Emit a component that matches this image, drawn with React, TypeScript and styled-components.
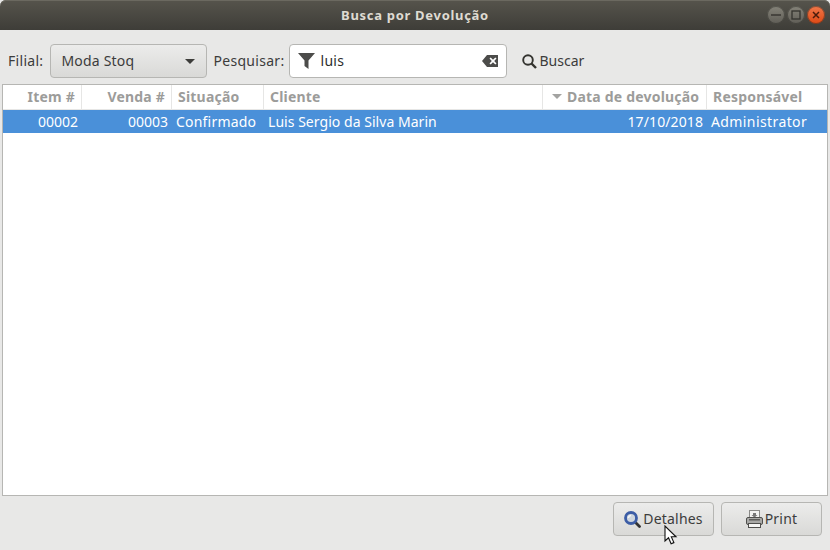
import styled, { createGlobalStyle } from 'styled-components';

const GlobalStyle = createGlobalStyle`
  html, body {
    margin: 0;
    padding: 0;
    background: #e8e8e7;
  }
  * {
    box-sizing: border-box;
  }
`;

const COLUMNS = '79px 90px 92px 279px 164px 1fr';

const HEADERS = [
  { title: 'Item #', align: 'right' },
  { title: 'Venda #', align: 'right' },
  { title: 'Situação', align: 'left' },
  { title: 'Cliente', align: 'left' },
  { title: 'Data de devolução', align: 'left', sorted: true },
  { title: 'Responsável', align: 'left' },
];

// tracking makes up for the gap between the installed font and the original one
const ROW = [
  { text: '00002', align: 'right', tracking: 0 },
  { text: '00003', align: 'right', tracking: 0 },
  { text: 'Confirmado', align: 'left', tracking: 0.2 },
  { text: 'Luis Sergio da Silva Marin', align: 'left', tracking: 0.04 },
  { text: '17/10/2018', align: 'right', tracking: 0.1 },
  { text: 'Administrator', align: 'left', tracking: 0.4 },
];

const App = () => (
  <Window>
    <GlobalStyle />
    <TitleBar>
      Busca por Devolução
      <WindowButtons>
        <WindowButton>
          <svg width="10" height="10" viewBox="0 0 10 10">
            <path d="M0 5h10" stroke="#34332e" strokeWidth="1.4" />
          </svg>
        </WindowButton>
        <WindowButton>
          <svg width="10" height="10" viewBox="0 0 10 10">
            <rect x="1" y="1" width="8" height="8" fill="none" stroke="#34332e" strokeWidth="1.300" />
          </svg>
        </WindowButton>
        <WindowButton $close>
          <svg width="10" height="10" viewBox="0 0 10 10">
            <path d="M2 2l6 6M8 2l-6 6" stroke="#4a1c0c" strokeWidth="1.500" />
          </svg>
        </WindowButton>
      </WindowButtons>
    </TitleBar>

    <Toolbar>
      <Label $gap={7}>Filial:</Label>
      <Combo>
        <Caption>Moda Stoq</Caption>
        <svg width="10" height="5" viewBox="0 0 10 5">
          <path d="M0 0h10L5 5z" fill="#3d3d3a" />
        </svg>
      </Combo>
      <Label $gap={5}>Pesquisar:</Label>
      <SearchEntry>
        <svg width="17" height="16" viewBox="0 0 17 16">
          <path d="M0 0h17L10.500 7.500V16L6.500 13V7.500z" fill="#4c4c4a" />
        </svg>
        <SearchText>luis</SearchText>
        <svg width="16" height="12" viewBox="0 0 16 12">
          <path
            fillRule="evenodd"
            d="M5 0h11v12H5L0 6zM7.500 3.500L9.800 6 7.500 8.500l1.200 1L11 7.200l2.300 2.300 1.200-1L12.200 6l2.300-2.500-1.200-1L11 4.800 8.700 2.500z"
            fill="#4c4c4a"
          />
        </svg>
      </SearchEntry>
      <SearchButton>
        <svg width="15" height="15" viewBox="0 0 15 15">
          <circle cx="6" cy="6" r="4.800" fill="none" stroke="#33332f" strokeWidth="1.900" />
          <path d="M9.500 9.500L14 14" stroke="#33332f" strokeWidth="2.400" />
        </svg>
        <Caption>Buscar</Caption>
      </SearchButton>
    </Toolbar>

    <Tree>
      <HeaderRow>
        {HEADERS.map(header => (
          <HeaderCell key={header.title} $align={header.align} $sorted={header.sorted}>
            {header.sorted && (
              <svg width="10" height="5" viewBox="0 0 10 5">
                <path d="M0 0h10L5 5z" fill="#a3a3a1" />
              </svg>
            )}
            {header.title}
          </HeaderCell>
        ))}
      </HeaderRow>
      <SelectedRow>
        {ROW.map(cell => (
          <Cell key={cell.text} $align={cell.align} $tracking={cell.tracking}>
            {cell.text}
          </Cell>
        ))}
      </SelectedRow>
    </Tree>

    <Footer>
      <ActionButton>
        <svg width="17" height="17" viewBox="0 0 17 17">
          <path d="M11.500 11.500L15.500 15.500" stroke="#333" strokeWidth="2.800" strokeLinecap="round" />
          <circle cx="7" cy="7" r="5.500" fill="#cfd6de" stroke="#3c5da6" strokeWidth="2.800" />
          <path d="M4.500 7a2.500 2.500 0 0 1 2.500-2.500" fill="none" stroke="#f4f6f8" strokeWidth="1.500" />
        </svg>
        <Caption>Detalhes</Caption>
      </ActionButton>
      <ActionButton>
        <svg width="17" height="18" viewBox="0 0 17 18">
          <rect x="3.500" y="0.500" width="10" height="8" fill="#f2f2f1" stroke="#8a8a88" />
          <path d="M7 3h3v2h1.500L8.500 7.500 5.500 5H7z" fill="#777" />
          <rect x="0.500" y="7.500" width="16" height="7" rx="1.500" fill="#a9a9a7" stroke="#4f4f4d" />
          <rect x="3" y="9" width="11" height="1.500" fill="#5c5c5a" />
          <rect x="2.500" y="13.500" width="12" height="4" fill="#f6f6f5" stroke="#4f4f4d" />
        </svg>
        <Caption>Print</Caption>
      </ActionButton>
      <Cursor width="14" height="20" viewBox="0 0 14 20">
        <path d="M1 1v15l3.500-3.200 2.600 6 2.800-1.200-2.600-5.800H12z" fill="#fff" stroke="#111" strokeWidth="1.100" />
      </Cursor>
    </Footer>
  </Window>
);

export default App;

const Window = styled.div`
  display: flex;
  flex-direction: column;
  width: 830px;
  height: 550px;
  overflow: hidden;
  background: #e8e8e7;
  color: #3c3c3c;
  font-family: 'Noto Sans', 'Open Sans', sans-serif;
  font-size: 14px;
`;

const TitleBar = styled.div`
  position: relative;
  display: flex;
  align-items: center;
  justify-content: center;
  flex: 0 0 30px;
  border-radius: 6px 6px 0 0;
  background: linear-gradient(#56544c, #3e3d38);
  box-shadow: inset 0 1px 0 #6b6960;
  color: #dfdbd2;
  font-size: 13px;
  font-weight: 700;
  letter-spacing: 0.7px;
`;

const WindowButtons = styled.div`
  position: absolute;
  top: 6px;
  right: 5px;
  display: flex;
  gap: 2px;
`;

const WindowButton = styled.div<{ $close?: boolean }>`
  display: flex;
  align-items: center;
  justify-content: center;
  width: 18px;
  height: 18px;
  border-radius: 50%;
  background: ${({ $close }) =>
    $close ? 'linear-gradient(#f0784a, #dd4814)' : 'linear-gradient(#858379, #5f5d56)'};
  box-shadow: inset 0 0 0 1px rgba(40, 39, 35, 0.5);
`;

const Toolbar = styled.div`
  display: flex;
  align-items: center;
  flex: 0 0 54px;
  padding: 8px 8px 0;
`;

const Caption = styled.span`
  margin-bottom: 2px;
`;

const Label = styled.span<{ $gap: number }>`
  margin-right: ${({ $gap }) => $gap}px;
  margin-bottom: 2px;
  letter-spacing: 0.3px;
`;

const Combo = styled.div`
  display: flex;
  align-items: center;
  justify-content: space-between;
  width: 157px;
  height: 34px;
  margin-right: 6px;
  padding: 0 11px 0 10px;
  border: 1px solid #b6b6b3;
  border-radius: 4px;
  background: linear-gradient(#ececeb, #d9d9d7);
  letter-spacing: 0.2px;
`;

const SearchEntry = styled.div`
  display: flex;
  align-items: center;
  width: 218px;
  height: 34px;
  padding: 0 8px;
  border: 1px solid #b6b6b3;
  border-radius: 4px;
  background: #fff;
`;

const SearchText = styled.span`
  flex: 1;
  margin: 0 0 2px 5px;
  color: #2e2e2e;
  letter-spacing: 0.3px;
`;

const SearchButton = styled.div`
  display: flex;
  align-items: center;
  gap: 2px;
  margin-left: 15px;
`;

const Tree = styled.div`
  flex: 0 0 412px;
  margin: 0 2px;
  border: 1px solid #b6b6b3;
  background: #fff;
`;

const HeaderRow = styled.div`
  display: grid;
  grid-template-columns: ${COLUMNS};
  height: 25px;
`;

const HeaderCell = styled.div<{ $align: string; $sorted?: boolean }>`
  display: flex;
  align-items: center;
  justify-content: ${({ $align }) => ($align === 'right' ? 'flex-end' : 'flex-start')};
  gap: 5px;
  padding: 0 6px 1px ${({ $sorted }) => ($sorted ? '9px' : '6px')};
  border-right: 1px solid #e6e6e5;
  border-bottom: 1px solid #e6e6e5;
  color: #9c9c9a;
  font-weight: 700;
  letter-spacing: 0.2px;

  &:last-child {
    border-right: 0;
  }
`;

const SelectedRow = styled.div`
  display: grid;
  grid-template-columns: ${COLUMNS};
  height: 23px;
  background: #4a90d9;
  color: #fff;
`;

const Cell = styled.div<{ $align: string; $tracking: number }>`
  display: flex;
  align-items: center;
  justify-content: ${({ $align }) => ($align === 'right' ? 'flex-end' : 'flex-start')};
  padding: 0 4px;
  letter-spacing: ${({ $tracking }) => $tracking}px;
  white-space: nowrap;
`;

const Footer = styled.div`
  position: relative;
  display: flex;
  justify-content: flex-end;
  gap: 7px;
  padding: 6px 8px 0;
`;

const ActionButton = styled.div`
  display: flex;
  align-items: center;
  justify-content: center;
  gap: 2px;
  width: 101px;
  height: 34px;
  border: 1px solid #b6b6b3;
  border-radius: 4px;
  background: linear-gradient(#ececeb, #d9d9d7);
  letter-spacing: 0.2px;
`;

const Cursor = styled.svg`
  position: absolute;
  top: 29px;
  left: 664px;
`;
